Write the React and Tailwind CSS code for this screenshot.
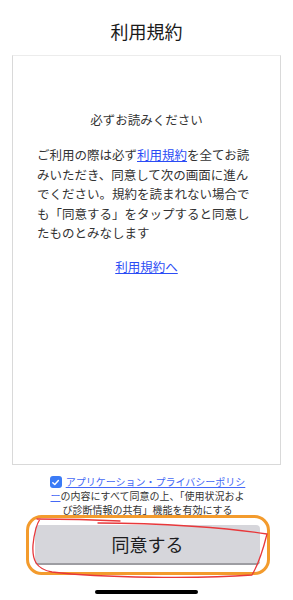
const jp = { fontFamily: '"Noto Sans CJK JP", "Noto Sans", sans-serif' };

function Annotation() {
  return (
    <svg
      className="pointer-events-none absolute left-0 top-0"
      width="293"
      height="600"
      viewBox="0 0 293 600"
      fill="none"
    >
      <rect x="27.5" y="516.5" width="241" height="57" rx="14" stroke="#f39b2d" strokeWidth="3" />
      <path
        d="M37 519 C70 519 100 520 120 521 M98 523 C160 523 230 528 267 534 C263 550 258 565 252 575 C200 579 100 578 52 572 C36 569 32 560 33 545 C34 535 36 525 40 519"
        stroke="#e8383b"
        strokeWidth="1.3"
        strokeLinecap="round"
      />
    </svg>
  );
}

export default function App() {
  return (
    <main className="relative flex h-[600px] w-[293px] flex-col overflow-hidden bg-white text-[#222]" style={jp}>
      <h1 className="pt-[19px] text-center text-[18px] leading-[24px] text-[#1a1a1a]">利用規約</h1>

      <section className="mx-[12px] mt-[12px] h-[410px] border border-[#d9d9d9] border-t-[#ececec]">
        <div className="pt-[54px] text-center text-[12.5px] leading-[20px] text-[#333]">必ずお読みください</div>
        <div className="mt-[15px] pl-[24px] text-[12.5px] leading-[19.5px] text-[#333]">
          <div className="whitespace-nowrap">
            ご利用の際は必ず<span className="text-[#2b4cf5] underline">利用規約</span>を全てお読
          </div>
          <div className="whitespace-nowrap">みいただき、同意して次の画面に進ん</div>
          <div className="whitespace-nowrap">でください。規約を読まれない場合で</div>
          <div className="whitespace-nowrap">も「同意する」をタップすると同意し</div>
          <div className="whitespace-nowrap">たものとみなします</div>
        </div>
        <div className="mt-[14px] text-center text-[12.5px] leading-[20px]">
          <span className="text-[#2b4cf5] underline">利用規約へ</span>
        </div>
      </section>

      <div className="mt-[10px] flex flex-col items-center pl-[2px] text-[10px] leading-[14px] text-[#333]">
        <div className="flex items-center whitespace-nowrap">
          <span className="mr-[4px] flex h-[12px] w-[12px] items-center justify-center rounded-[3px] bg-[#3b7bf6]">
            <svg width="9" height="9" viewBox="0 0 10 10" fill="none">
              <path d="M2 5.2 L4.2 7.3 L8.2 2.8" stroke="white" strokeWidth="1.6" strokeLinecap="round" strokeLinejoin="round" />
            </svg>
          </span>
          <span className="text-[#4568f5] underline">アプリケーション・プライバシーポリシ</span>
        </div>
        <div className="whitespace-nowrap">
          <span className="text-[#4568f5] underline">ー</span>の内容にすべて同意の上、「使用状況およ
        </div>
        <div className="whitespace-nowrap">び診断情報の共有」機能を有効にする</div>
      </div>

      <button className="ml-[35px] mt-[8px] flex h-[40px] w-[225px] items-center justify-center rounded-[4px] border-b-2 border-[#9d9da2] bg-[#d6d6db] text-[18px] text-[#1c1c1e]">
        同意する
      </button>

      <div className="ml-[95px] mt-[25px] h-[4px] w-[103px] rounded-full bg-black" />

      <Annotation />
    </main>
  );
}
